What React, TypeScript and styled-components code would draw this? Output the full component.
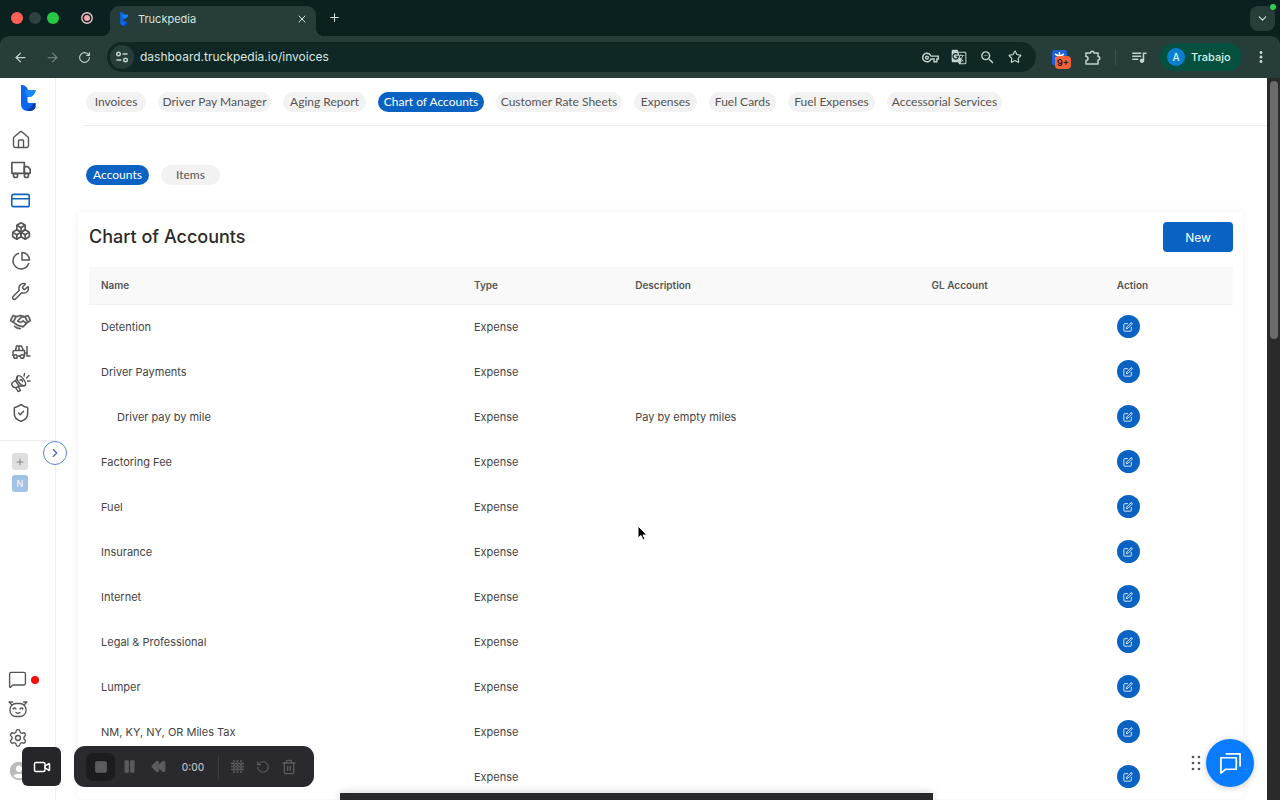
import React from 'react';
import styled, { createGlobalStyle } from 'styled-components';
import {
  ArrowLeft, ArrowRight, RotateCw, X, Plus, ChevronDown, ChevronRight, Star, House,
  CreditCard, Wrench, Square, Pause, Rewind, Trash2, RotateCcw, Video, MessageSquare, Settings, ShieldCheck,
} from 'lucide-react';
import { FiTruck, FiEdit } from 'react-icons/fi';
import { LuBoxes } from 'react-icons/lu';
import { PiHandshake } from 'react-icons/pi';
import {
  MdOutlineVpnKey, MdGTranslate, MdZoomOut, MdQueueMusic, MdMoreVert, MdAccountCircle,
} from 'react-icons/md';

const Global = createGlobalStyle`
  *, *::before, *::after { box-sizing: border-box; }
  html, body, #root { height: 100%; }
  body { margin: 0; font-family: Inter, "Liberation Sans", sans-serif; color: #444; background: #fff; overflow: hidden; }
  button { border: 0; padding: 0; margin: 0; font: inherit; color: inherit; background: none; cursor: pointer; }
  a { color: inherit; text-decoration: none; }
  svg { display: block; flex: none; }
`;

const Browser = styled.div`
  height: 100vh;
  display: flex;
  flex-direction: column;
  overflow: hidden;
`;

const TabStrip = styled.div`
  position: relative;
  height: 36px;
  flex: none;
  display: flex;
  align-items: flex-end;
  background: #0a2120;
  color: #d5e3df;
`;

const WindowControls = styled.div`
  display: flex;
  align-items: center;
  gap: 6px;
  height: 36px;
  padding-left: 11px;
  width: 81px;
`;

const Light = styled.span<{ $color: string }>`
  width: 12px;
  height: 12px;
  border-radius: 50%;
  background: ${(p) => p.$color};
`;

const RecordButton = styled.button`
  width: 29px;
  height: 36px;
`;

const Tab = styled.div`
  position: relative;
  display: flex;
  align-items: center;
  width: 206px;
  height: 30px;
  padding: 0 8px 4px 8px;
  border-radius: 9px 9px 0 0;
  background: #273d3a;
  font-size: 11px;
  line-height: 16px;

  &::before,
  &::after {
    content: '';
    position: absolute;
    bottom: 0;
    width: 8px;
    height: 8px;
  }
  &::before {
    right: 100%;
    background: radial-gradient(circle at 0 0, transparent 8px, #273d3a 8px);
  }
  &::after {
    left: 100%;
    background: radial-gradient(circle at 100% 0, transparent 8px, #273d3a 8px);
  }
`;

const TabTitle = styled.span`
  flex: 1;
  padding-left: 8px;
`;

const NewTab = styled.button`
  margin: 0 0 12px 12px;
`;

const TabSearch = styled.button`
  display: grid;
  place-items: center;
  width: 25px;
  height: 25px;
  margin: 0 5px 5px auto;
  border-radius: 8px;
  background: #273d3a;
`;

const CameraDot = styled.span`
  position: absolute;
  top: 4px;
  right: 4px;
  width: 6px;
  height: 6px;
  border-radius: 50%;
  background: #2ed158;
`;

const ToolbarShell = styled.div`
  flex: none;
  background: #0a2120;
`;

const Toolbar = styled.div`
  height: 42px;
  display: flex;
  align-items: center;
  border-radius: 9px 9px 0 0;
  background: #273d3a;
  color: #c3d3cf;
`;

const NavButton = styled.button<{ $dim?: boolean }>`
  display: grid;
  place-items: center;
  width: 32px;
  height: 30px;
  opacity: ${(p) => (p.$dim ? 0.45 : 1)};
`;

const NavButtons = styled.div`
  display: flex;
  width: 107px;
  padding-left: 4px;
`;

const AddressBar = styled.div`
  flex: 1;
  display: flex;
  align-items: center;
  height: 30px;
  padding: 0 14px 0 3px;
  border-radius: 15px;
  background: #0f2825;
`;

const SiteInfo = styled.button`
  display: grid;
  place-items: center;
  width: 24px;
  height: 24px;
  border-radius: 50%;
  background: #273d3a;
`;

const Address = styled.input`
  flex: 1;
  min-width: 0;
  border: 0;
  padding: 0 0 0 6px;
  outline: 0;
  background: none;
  color: #d8e6e2;
  font: 400 12px/18px Inter, "Liberation Sans", sans-serif;
`;

const AddressActions = styled.div`
  display: flex;
  align-items: center;
  gap: 12px;
`;

const Extensions = styled.div`
  display: flex;
  align-items: center;
  gap: 14px;
  padding: 0 12px 0 16px;
`;

const ExtensionBadge = styled.button`
  position: relative;
  width: 18px;
  height: 18px;
`;

const BadgeCount = styled.span`
  position: absolute;
  left: 3px;
  top: 8px;
  width: 16px;
  height: 13px;
  border-radius: 4px;
  background: #f4623a;
  color: #2a120b;
  font-size: 9px;
  font-weight: 600;
  line-height: 13px;
`;

const Separator = styled.span`
  width: 1px;
  height: 16px;
  background: #3d5551;
`;

const Profile = styled.button`
  display: flex;
  align-items: center;
  gap: 6px;
  width: 82px;
  height: 28px;
  padding-left: 7px;
  border-radius: 14px;
  background: #05503f;
  color: #d5f2e6;
  font-size: 11px;
  font-weight: 500;
`;

const Avatar = styled.span`
  width: 18px;
  height: 18px;
  border-radius: 50%;
  background: #0b80d0;
  font-size: 10px;
  line-height: 18px;
  text-align: center;
`;

const MoreButton = styled.button`
  margin: 0 10px;
`;

const Page = styled.div`
  position: relative;
  flex: 1;
  min-height: 0;
  display: flex;
  background: #fff;
`;

const Sidebar = styled.nav`
  display: flex;
  flex-direction: column;
  width: 56px;
  flex: none;
  border-right: 1px solid #f1f1f1;
  color: #555;
`;

const Logo = styled.a`
  display: flex;
  justify-content: center;
  height: 47px;
  padding-top: 7px;
`;

const SideLinks = styled.div`
  position: relative;
  display: flex;
  flex-direction: column;
  justify-content: space-between;
  align-items: flex-start;
  height: 316px;
  padding: 0 0 12px 10px;
  border-bottom: 1px solid #ececec;
`;

const SideLink = styled.a<{ $active?: boolean }>`
  display: grid;
  place-items: center;
  width: 21px;
  height: 30px;
  color: ${(p) => (p.$active ? '#0a62c2' : '#555')};
`;

const Expand = styled.button`
  position: absolute;
  left: 43px;
  bottom: -25px;
  z-index: 2;
  display: grid;
  place-items: center;
  width: 24px;
  height: 24px;
  border: 1px solid #5b7fd6;
  border-radius: 50%;
  background: #fff;
  color: #3f66cf;
`;

const Workspaces = styled.div`
  display: flex;
  flex-direction: column;
  gap: 5px;
  padding: 12px 0 0 12px;
`;

const Workspace = styled.button<{ $blue?: boolean }>`
  display: grid;
  place-items: center;
  width: 16px;
  height: 17px;
  border-radius: 3px;
  background: ${(p) => (p.$blue ? '#9fc3e6' : '#dedede')};
  color: ${(p) => (p.$blue ? '#fff' : '#777')};
  font-size: 9px;
  line-height: 16px;
`;

const SideFooter = styled.div`
  display: flex;
  flex-direction: column;
  margin-top: auto;
  padding: 0 0 10px 8px;
`;

const FooterRow = styled.a<{ $tall?: boolean }>`
  display: flex;
  align-items: center;
  gap: 4px;
  height: ${(p) => (p.$tall ? 38 : 29)}px;
`;

const UnreadDot = styled.span`
  width: 8px;
  height: 8px;
  border-radius: 50%;
  background: #f20d0d;
`;

const Main = styled.main`
  flex: 1;
  min-width: 0;
  overflow: hidden;
  padding: 0 24px 0 27px;
`;

const Pills = styled.div<{ $sub?: boolean }>`
  display: flex;
  gap: 12px;
  padding: ${(p) => (p.$sub ? '39px 0 27px 3px' : '14px 0 13px 3px')};
  border-bottom: ${(p) => (p.$sub ? '0' : '1px solid #ebebeb')};
  margin-right: ${(p) => (p.$sub ? 0 : -24)}px;
`;

const Pill = styled.a<{ $active?: boolean; $width: number }>`
  width: ${(p) => p.$width}px;
  height: 20px;
  border-radius: 10px;
  text-align: center;
  white-space: nowrap;
  font-family: Lato, "Liberation Sans", sans-serif;
  font-size: 12px;
  line-height: 20px;
  background: ${(p) => (p.$active ? '#0a62c2' : '#f2f2f2')};
  color: ${(p) => (p.$active ? '#fff' : '#555')};
`;

const Card = styled.section`
  margin-left: -5px;
  padding: 10px 10px 0 11px;
  border-radius: 4px;
  box-shadow: 0 0 10px rgba(0, 0, 0, 0.06);
`;

const CardHeader = styled.header`
  display: flex;
  align-items: center;
  justify-content: space-between;
  height: 30px;
  margin-bottom: 15px;
`;

const Title = styled.h1`
  margin: 0;
  color: #2b2b2b;
  font-size: 18px;
  font-weight: 500;
  line-height: 24px;
`;

const NewButton = styled.button`
  width: 70px;
  height: 30px;
  border-radius: 4px;
  background: #0a62c2;
  color: #fff;
  font-size: 12px;
`;

const Table = styled.table`
  width: 100%;
  border-collapse: collapse;
  table-layout: fixed;
  font-size: 11px;
  line-height: 16px;
`;

const Th = styled.th<{ $share: number }>`
  width: ${(p) => p.$share}%;
  height: 37px;
  padding: 0 12px;
  background: #f9f9f9;
  border-bottom: 1px solid #f0f0f0;
  color: #555;
  font-size: 10px;
  font-weight: 600;
  text-align: left;
`;

const Row = styled.tr`
  height: 45px;
`;

const Td = styled.td<{ $child?: boolean }>`
  padding: 0 12px 0 ${(p) => (p.$child ? 28 : 12)}px;
  color: #444;
`;

const EditButton = styled.button`
  display: grid;
  place-items: center;
  width: 23px;
  height: 23px;
  border-radius: 50%;
  background: #0a62c2;
  color: #fff;
`;

const ScrollTrack = styled.div`
  width: 13px;
  flex: none;
  padding: 3px 2px 0 3px;
  background: #2a2a2a;
`;

const ScrollThumb = styled.div`
  height: 258px;
  border-radius: 4px;
  background: #6b6b6b;
`;

const Overlay = styled.div`
  position: fixed;
  left: 22px;
  bottom: 13px;
  z-index: 3;
  display: flex;
  align-items: center;
  gap: 13px;
`;

const CameraButton = styled.button`
  display: grid;
  place-items: center;
  width: 39px;
  height: 39px;
  border-radius: 6px;
  background: #26252a;
  color: #fff;
`;

const Recorder = styled.div`
  display: flex;
  align-items: center;
  width: 240px;
  height: 41px;
  padding: 0 12px;
  border-radius: 11px;
  background: #2a292e;
  color: #5c5b60;
`;

const RecorderButton = styled.button<{ $wide?: boolean; $pressed?: boolean }>`
  display: grid;
  place-items: center;
  width: ${(p) => (p.$wide ? 29 : 26)}px;
  height: 28px;
  border-radius: 7px;
  background: ${(p) => (p.$pressed ? '#1c1b20' : 'none')};
`;

const Time = styled.time`
  width: 40px;
  color: #b9b9bd;
  font-size: 10px;
  font-weight: 500;
  text-align: center;
`;

const RecorderLine = styled.span`
  width: 1px;
  height: 24px;
  margin: 0 5px;
  background: #3d3c41;
`;

const ChatDock = styled.div`
  position: fixed;
  right: 26px;
  bottom: 13px;
  display: flex;
  align-items: center;
  gap: 4px;
`;

const ChatButton = styled.button`
  display: grid;
  place-items: center;
  width: 48px;
  height: 48px;
  border-radius: 50%;
  background: #0a7cff;
  box-shadow: 0 1px 6px rgba(0, 0, 0, 0.2);
`;

const Shelf = styled.div`
  position: fixed;
  left: 340px;
  right: 347px;
  bottom: 0;
  height: 7px;
  background: #29282b;
  box-shadow: 0 0 10px rgba(0, 0, 0, 0.2);
`;

const Pointer = styled.div`
  position: fixed;
  left: 637px;
  top: 525px;
`;

const TruckpediaMark = ({ width, height }: { width: number; height: number }) => (
  <svg width={width} height={height} viewBox="0 0 16 26" aria-hidden="true">
    <path d="M1 0C5 0 7 2 8 5H15.500C15.500 8.500 12.500 12 8.500 12H7.500V16Q7.500 18 9.500 18H15.500V22Q14.500 26 9 26H7Q1 25 1 19Z" fill="#0867f2" />
    <path d="M5 5H15.500C15.500 8.500 12.500 12 8.500 12Q5 10 5 5Z" fill="#1689ff" />
    <path d="M7 24Q11 24 12 20L15.500 18V22Q14.500 26 9 26Z" fill="#073ba8" />
  </svg>
);

const PuzzleIcon = () => (
  <svg width="17" height="17" viewBox="0 0 17 17" fill="none" stroke="currentColor" strokeWidth="1.500" strokeLinejoin="round">
    <path d="M2 4H6.500A1.700 1.700 0 0 1 9.900 4H14V7.500A1.700 1.700 0 0 1 14 11V15H2V11.500A2 2 0 0 0 2 7.500Z" />
  </svg>
);

const PieIcon = () => (
  <svg width="20" height="20" viewBox="0 0 20 20" fill="none" stroke="currentColor" strokeWidth="1.500">
    <path d="M8 2.200A8 8 0 1 0 17.800 12" />
    <path d="M11 1.500A7.500 7.500 0 0 1 18.500 9H11Z" strokeLinejoin="round" />
  </svg>
);

const ForkliftIcon = () => (
  <svg width="20" height="18" viewBox="0 0 20 18" fill="none" stroke="currentColor" strokeWidth="1.500" strokeLinejoin="round">
    <path d="M4.500 7.500L5.500 3H10.500L12.500 7.500M8 3V7.500M2 13V9Q2 7.500 3.500 7.500H13.500V13H13M9.500 13H6.500M16 3V13H19.500M13.500 10H16" />
    <circle cx="4.500" cy="13.500" r="1.800" />
    <circle cx="11.200" cy="13.500" r="1.800" />
  </svg>
);

const MegaphoneIcon = () => (
  <svg width="21" height="21" viewBox="0 0 21 21" fill="none" stroke="currentColor" strokeWidth="1.400" strokeLinejoin="round" strokeLinecap="round">
    <ellipse cx="11.200" cy="8.800" rx="2.800" ry="6" transform="rotate(-38 11.200 8.800)" />
    <path d="M7.500 4.500L6 8L2.500 10.500Q1 12 2.500 14T6 15.500L10.500 14L15 13.500M5.500 8.500L9 14M10 8Q12 7 12.500 9.500M5.500 15.500L8 19.500L10.500 18.500L8.500 15" />
    <path d="M14 4L14.500 1.500M16.500 6L19 3.500M17.500 9H20" />
  </svg>
);

const BotIcon = () => (
  <svg width="20" height="18" viewBox="0 0 20 18" fill="none" stroke="currentColor" strokeWidth="1.300" strokeLinecap="round">
    <rect x="2" y="3.500" width="16" height="13" rx="6" />
    <path d="M4 5L1 2M4.500 2L1 2M16 5L19 2M15.500 2L19 2M5 9Q6.500 7 8 9M12 9Q13.500 7 15 9M8 12.500Q10 14 12 12.500" />
  </svg>
);

const TuneIcon = () => (
  <svg width="14" height="14" viewBox="0 0 14 14" fill="none" stroke="currentColor" strokeWidth="1.400">
    <circle cx="3.500" cy="4" r="1.800" />
    <path d="M7.500 4H12.500M1.500 10H6.500" />
    <circle cx="10.500" cy="10" r="1.800" />
  </svg>
);

const DottedGridIcon = () => (
  <svg width="15" height="15" viewBox="0 0 15 15" fill="none" stroke="currentColor" strokeWidth="1.500" strokeDasharray="2.500 1">
    <path d="M4 1V14M7.500 1V14M11 1V14M1 4.500H14M1 7.500H14M1 10.500H14" />
  </svg>
);

const tabs: [string, number][] = [
  ['Invoices', 60], ['Driver Pay Manager', 113], ['Aging Report', 83], ['Chart of Accounts', 106],
  ['Customer Rate Sheets', 126], ['Expenses', 63], ['Fuel Cards', 67], ['Fuel Expenses', 87], ['Accessorial Services', 115],
];

const columns: [string, number][] = [['Name', 32.6], ['Type', 14.1], ['Description', 25.9], ['GL Account', 16.2], ['Action', 11.2]];

const rows: { name: string; description?: string; child?: boolean }[] = [
  { name: 'Detention' }, { name: 'Driver Payments' },
  { name: 'Driver pay by mile', description: 'Pay by empty miles', child: true },
  { name: 'Factoring Fee' }, { name: 'Fuel' }, { name: 'Insurance' }, { name: 'Internet' },
  { name: 'Legal & Professional' }, { name: 'Lumper' }, { name: 'NM, KY, NY, OR Miles Tax' }, { name: '' },
];

const sideItems: [string, React.ReactNode][] = [
  ['Home', <House size={20} strokeWidth={1.7} />],
  ['Trucks', <FiTruck size={20} />],
  ['Accounting', <CreditCard size={21} strokeWidth={1.8} />],
  ['Inventory', <LuBoxes size={20} />],
  ['Reports', <PieIcon />],
  ['Maintenance', <Wrench size={19} strokeWidth={1.8} />],
  ['Partners', <PiHandshake size={21} strokeWidth={5} />],
  ['Equipment', <ForkliftIcon />],
  ['Marketing', <MegaphoneIcon />],
  ['Safety', <ShieldCheck size={20} strokeWidth={1.8} />],
];

export default function App() {
  return (
    <Browser>
      <Global />
      <TabStrip>
        <WindowControls>
          <Light $color="#ff5f57" />
          <Light $color="#2c4240" />
          <Light $color="#28c840" />
        </WindowControls>
        <RecordButton aria-label="Recording">
          <svg width="12" height="12" viewBox="0 0 12 12">
            <circle cx="6" cy="6" r="5.200" fill="none" stroke="#f3c8cc" strokeWidth="1.400" />
            <circle cx="6" cy="6" r="3" fill="#f3a9b0" />
          </svg>
        </RecordButton>
        <Tab>
          <TruckpediaMark width={12} height={14} />
          <TabTitle>Truckpedia</TabTitle>
          <button aria-label="Close tab"><X size={12} /></button>
        </Tab>
        <NewTab aria-label="New tab"><Plus size={13} /></NewTab>
        <TabSearch aria-label="Search tabs"><ChevronDown size={13} /></TabSearch>
        <CameraDot />
      </TabStrip>
      <ToolbarShell>
        <Toolbar>
          <NavButtons>
            <NavButton aria-label="Back"><ArrowLeft size={15} /></NavButton>
            <NavButton aria-label="Forward" $dim><ArrowRight size={15} /></NavButton>
            <NavButton aria-label="Reload"><RotateCw size={13} /></NavButton>
          </NavButtons>
          <AddressBar>
            <SiteInfo aria-label="Site information"><TuneIcon /></SiteInfo>
            <Address aria-label="Address" defaultValue="dashboard.truckpedia.io/invoices" />
            <AddressActions>
              <button aria-label="Passwords"><MdOutlineVpnKey size={17} /></button>
              <button aria-label="Translate"><MdGTranslate size={16} /></button>
              <button aria-label="Zoom"><MdZoomOut size={17} /></button>
              <button aria-label="Bookmark"><Star size={14} /></button>
            </AddressActions>
          </AddressBar>
          <Extensions>
            <ExtensionBadge aria-label="Extension">
              <svg width="15" height="15" viewBox="0 0 15 15">
                <rect width="15" height="15" rx="2" fill="#1c5fd8" />
                <path d="M7.500 2V8M3 4L12 9M12 4L3 9" stroke="#fff" strokeWidth="1.500" />
              </svg>
              <BadgeCount>9+</BadgeCount>
            </ExtensionBadge>
            <button aria-label="Extensions"><PuzzleIcon /></button>
            <Separator />
            <button aria-label="Media"><MdQueueMusic size={18} /></button>
          </Extensions>
          <Profile><Avatar>A</Avatar>Trabajo</Profile>
          <MoreButton aria-label="Menu"><MdMoreVert size={18} /></MoreButton>
        </Toolbar>
      </ToolbarShell>
      <Page>
        <Sidebar aria-label="Main">
          <Logo href="#" aria-label="Truckpedia"><TruckpediaMark width={16} height={26} /></Logo>
          <SideLinks>
            {sideItems.map(([label, icon]) => (
              <SideLink key={label} href="#" aria-label={label} $active={label === 'Accounting'}>{icon}</SideLink>
            ))}
            <Expand aria-label="Expand menu"><ChevronRight size={14} /></Expand>
          </SideLinks>
          <Workspaces>
            <Workspace aria-label="Add workspace"><Plus size={10} /></Workspace>
            <Workspace $blue>N</Workspace>
          </Workspaces>
          <SideFooter>
            <FooterRow href="#" aria-label="Messages"><MessageSquare size={19} strokeWidth={1.7} /><UnreadDot /></FooterRow>
            <FooterRow href="#" aria-label="Assistant"><BotIcon /></FooterRow>
            <FooterRow href="#" aria-label="Settings"><Settings size={20} strokeWidth={1.6} /></FooterRow>
            <FooterRow href="#" aria-label="Account" $tall><MdAccountCircle size={22} color="#bbb" /></FooterRow>
          </SideFooter>
        </Sidebar>
        <Main>
          <Pills as="nav">
            {tabs.map(([label, width]) => (
              <Pill key={label} href="#" $width={width} $active={label === 'Chart of Accounts'}>{label}</Pill>
            ))}
          </Pills>
          <Pills $sub>
            <Pill href="#" $width={63} $active>Accounts</Pill>
            <Pill href="#" $width={59}>Items</Pill>
          </Pills>
          <Card>
            <CardHeader>
              <Title>Chart of Accounts</Title>
              <NewButton>New</NewButton>
            </CardHeader>
            <Table>
              <thead>
                <tr>{columns.map(([label, share]) => <Th key={label} $share={share}>{label}</Th>)}</tr>
              </thead>
              <tbody>
                {rows.map((row, i) => (
                  <Row key={i}>
                    <Td $child={row.child}>{row.name}</Td>
                    <Td>Expense</Td>
                    <Td>{row.description}</Td>
                    <Td />
                    <Td><EditButton aria-label="Edit account"><FiEdit size={10} /></EditButton></Td>
                  </Row>
                ))}
              </tbody>
            </Table>
          </Card>
        </Main>
        <ScrollTrack><ScrollThumb /></ScrollTrack>
      </Page>
      <Shelf />
      <Overlay>
        <CameraButton aria-label="Camera"><Video size={18} /></CameraButton>
        <Recorder>
          <RecorderButton aria-label="Stop" $wide $pressed><Square size={14} fill="currentColor" /></RecorderButton>
          <RecorderButton aria-label="Pause" $wide><Pause size={15} fill="currentColor" /></RecorderButton>
          <RecorderButton aria-label="Rewind" $wide><Rewind size={15} fill="currentColor" /></RecorderButton>
          <Time>0:00</Time>
          <RecorderLine />
          <RecorderButton aria-label="Grid"><DottedGridIcon /></RecorderButton>
          <RecorderButton aria-label="Restart"><RotateCcw size={14} /></RecorderButton>
          <RecorderButton aria-label="Delete"><Trash2 size={16} /></RecorderButton>
        </Recorder>
      </Overlay>
      <ChatDock>
        <svg width="12" height="16" viewBox="0 0 12 16" fill="#555">
          {[2, 8, 14].map((y) => <g key={y}><circle cx="3" cy={y} r="1.300" /><circle cx="9" cy={y} r="1.300" /></g>)}
        </svg>
        <ChatButton aria-label="Chat">
          <svg width="23" height="23" viewBox="0 0 24 24" fill="none" stroke="#fff" strokeWidth="1.800" strokeLinejoin="round">
            <path d="M2 6H18V18H7L2 22Z" />
            <path d="M7 2H22V15" />
          </svg>
        </ChatButton>
      </ChatDock>
      <Pointer>
        <svg width="11" height="16" viewBox="0 0 11 16"><path d="M1 1V13L4 10.500L6 15L8 14L6 10H10Z" fill="#000" stroke="#fff" /></svg>
      </Pointer>
    </Browser>
  );
}
